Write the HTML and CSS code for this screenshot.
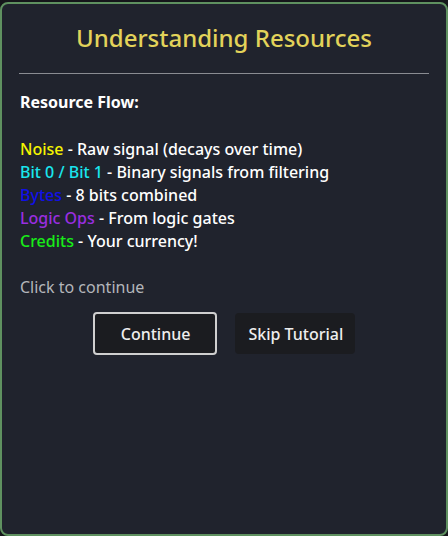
FILE: index.html
```html
<!DOCTYPE html>
<html>
<head>
<meta charset="utf-8">
<link rel="stylesheet" href="styles.css">
</head>
<body>
<div class="card">
  <h2 class="title">Understanding Resources</h2>
  <hr class="rule">
  <div class="content">
    <p class="heading">Resource Flow:</p>
    <p class="list">
      <span class="noise">Noise</span> - Raw signal (decays over time)<br>
      <span class="bit">Bit 0 / Bit 1</span> - Binary signals from filtering<br>
      <span class="bytes">Bytes</span> - 8 bits combined<br>
      <span class="logic">Logic Ops</span> - From logic gates<br>
      <span class="credits">Credits</span> - Your currency!
    </p>
  </div>
  <p class="hint">Click to continue</p>
  <div class="actions">
    <button class="btn btn-primary">Continue</button>
    <button class="btn btn-secondary">Skip Tutorial</button>
  </div>
</div>
</body>
</html>
```
FILE: styles.css
```css
html, body {
  margin: 0;
  padding: 0;
  background: #15161a;
}
body {
  padding-top: 2px;
  font-family: "Noto Sans", "Open Sans", sans-serif;
  color: #ffffff;
}
.card {
  box-sizing: border-box;
  width: 448px;
  height: 534px;
  background: #20232d;
  border: 2px solid #5f9160;
  border-radius: 8px;
  padding: 0 17px;
}
.title {
  margin: 18px 0 0;
  text-align: center;
  font-size: 24px;
  font-weight: 500;
  line-height: 32px;
  color: #e3d35a;
}
.rule {
  border: 0;
  border-top: 1px solid #8a8c92;
  margin: 19px 0 0;
}
.content {
  padding: 0 1px;
}
.heading {
  margin: 17px 0 0;
  font-weight: 700;
  font-size: 16px;
  line-height: 23px;
}
.list {
  margin: 24px 0 0;
  font-size: 16px;
  line-height: 23px;
  font-weight: 500;
}
.noise { color: #f5f500; }
.bit { color: #19e6ee; }
.bytes { color: #1010e8; }
.logic { color: #9a2ee0; }
.credits { color: #18ec18; }
.hint {
  margin: 23px 0 0 1px;
  font-size: 16px;
  line-height: 23px;
  color: #b4b6ba;
}
.actions {
  display: flex;
  justify-content: center;
  align-items: center;
  gap: 18px;
  margin-top: 13px;
}
.btn {
  font-family: "Noto Sans", "Open Sans", sans-serif;
  font-size: 16px;
  font-weight: 500;
  color: #eeeeee;
  background: #1b1c20;
  border-radius: 4px;
  cursor: pointer;
}
.btn-primary {
  border: 2px solid #cfcfcf;
  padding: 0 25px 0 26px;
  height: 43px;
}
.btn-secondary {
  border: 0;
  padding: 0 12px 0 13px;
  height: 41px;
}
```
